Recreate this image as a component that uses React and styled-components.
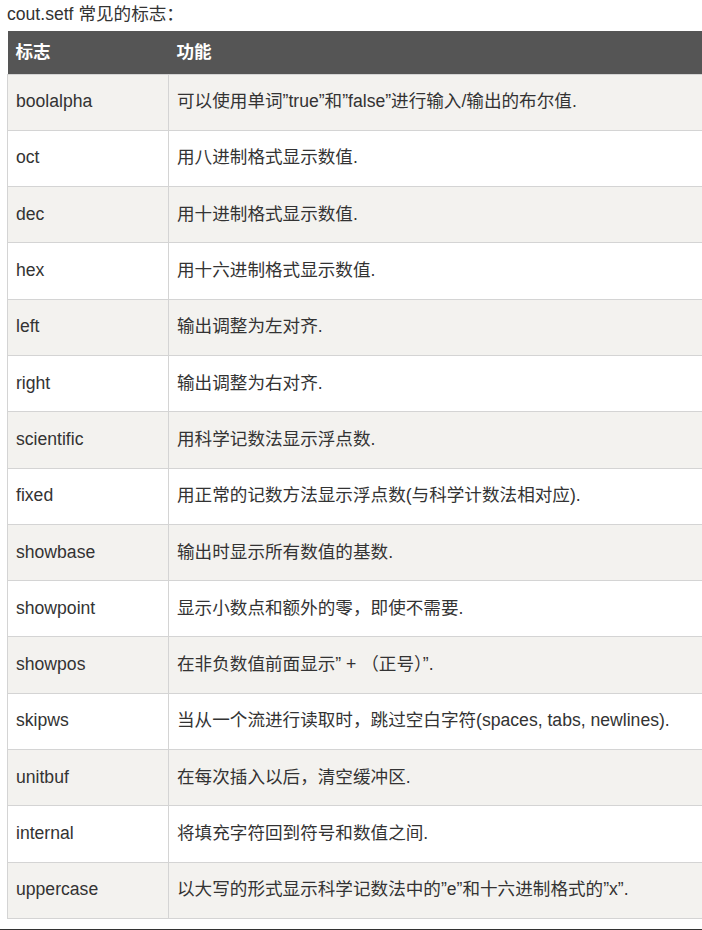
import React from "react";
import styled, { createGlobalStyle } from "styled-components";

const GlobalStyle = createGlobalStyle`
  html, body {
    margin: 0;
    padding: 0;
    overflow: hidden;
    background: #fff;
  }
  body {
    font-family: "Liberation Sans", "Noto Sans CJK SC", sans-serif;
    color: #333;
  }
`;

const Page = styled.div`
  padding: 0 0 0 7px;
`;

const Title = styled.p`
  margin: 0;
  height: 31px;
  font-size: 17.6px;
  line-height: 28px;
  color: #333;
`;

const Table = styled.table`
  width: 760px;
  border-collapse: collapse;
  table-layout: fixed;
  font-size: 17.6px;
`;

const HeadCell = styled.th`
  background: #555555;
  color: #fff;
  font-weight: bold;
  text-align: left;
  height: 43px;
  padding: 0 0 1px 8px;
  line-height: 24px;
  width: ${(p) => p.$width || "auto"};
  box-sizing: border-box;
`;

const Row = styled.tr`
  height: 56.3px;
  background: ${(p) => (p.$shaded ? "#f3f2ef" : "#fff")};
`;

const Cell = styled.td`
  border: 1px solid #d4d4d4;
  padding: 0 8px 2px;
  vertical-align: middle;
  line-height: 26px;
  color: #333;
`;

const Footer = styled.div`
  margin-top: 10px;
  margin-left: -7px;
  height: 3px;
  background: #333;
`;

const flags = [
  ["boolalpha", "可以使用单词”true”和”false”进行输入/输出的布尔值."],
  ["oct", "用八进制格式显示数值."],
  ["dec", "用十进制格式显示数值."],
  ["hex", "用十六进制格式显示数值."],
  ["left", "输出调整为左对齐."],
  ["right", "输出调整为右对齐."],
  ["scientific", "用科学记数法显示浮点数."],
  ["fixed", "用正常的记数方法显示浮点数(与科学计数法相对应)."],
  ["showbase", "输出时显示所有数值的基数."],
  ["showpoint", "显示小数点和额外的零，即使不需要."],
  ["showpos", "在非负数值前面显示” + （正号）”."],
  ["skipws", "当从一个流进行读取时，跳过空白字符(spaces, tabs, newlines)."],
  ["unitbuf", "在每次插入以后，清空缓冲区."],
  ["internal", "将填充字符回到符号和数值之间."],
  ["uppercase", "以大写的形式显示科学记数法中的”e”和十六进制格式的”x”."],
];

export default function App() {
  return (
    <>
      <GlobalStyle />
      <Page>
        <Title>cout.setf 常见的标志：</Title>
        <Table>
          <thead>
            <tr>
              <HeadCell $width="161px">标志</HeadCell>
              <HeadCell>功能</HeadCell>
            </tr>
          </thead>
          <tbody>
            {flags.map(([name, desc], i) => (
              <Row key={name} $shaded={i % 2 === 0}>
                <Cell>{name}</Cell>
                <Cell>{desc}</Cell>
              </Row>
            ))}
          </tbody>
        </Table>
        <Footer />
      </Page>
    </>
  );
}
